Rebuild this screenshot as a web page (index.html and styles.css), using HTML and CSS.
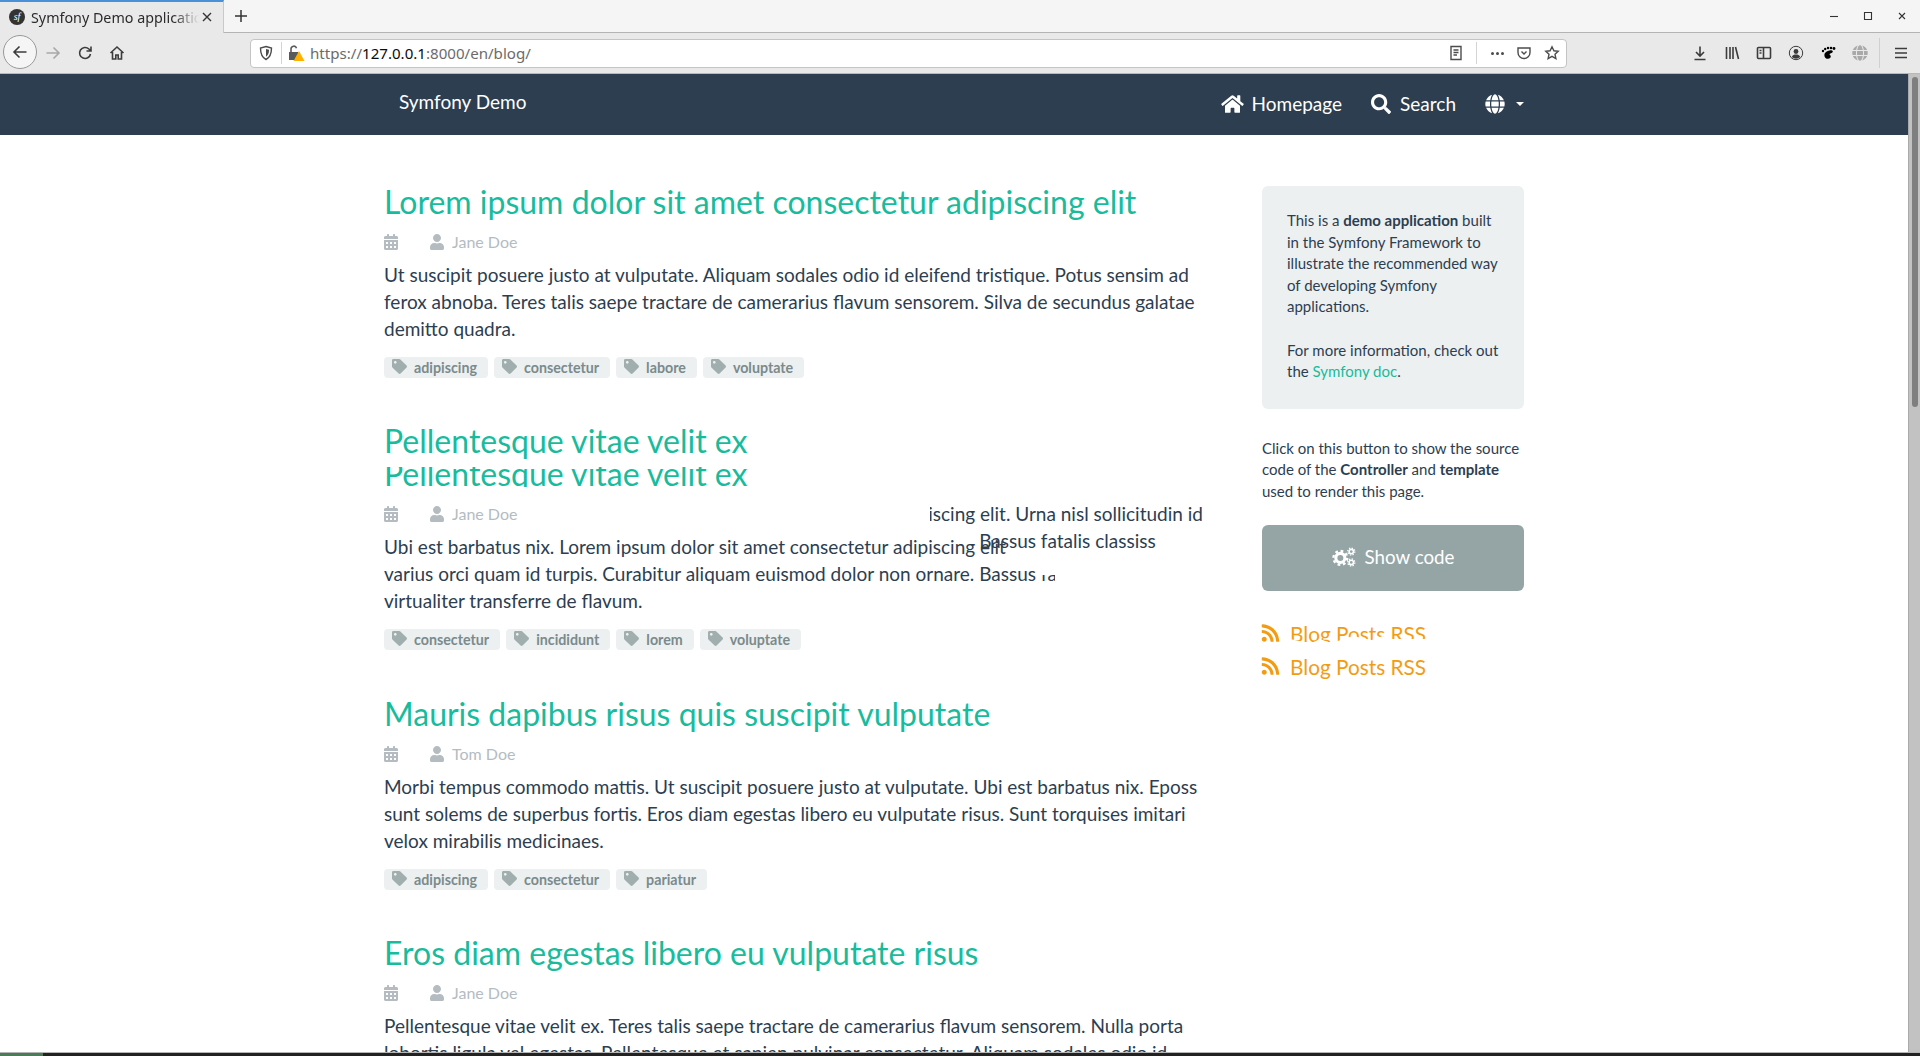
FILE: index.html
```html
<!DOCTYPE html>
<html lang="en">
<head>
    <meta charset="UTF-8">
    <meta name="viewport" content="width=device-width, initial-scale=1.0">
    <title>Symfony Demo application</title>
    <link rel="stylesheet" href="styles.css">
</head>
<body>

    <svg class="sprite">
        <symbol id="i-user" viewBox="0 0 448 512"><path d="M224 256c70.7 0 128-57.3 128-128S294.7 0 224 0 96 57.3 96 128s57.3 128 128 128zm89.6 32h-16.7c-22.2 10.2-46.9 16-72.9 16s-50.6-5.8-72.9-16h-16.7C60.2 288 0 348.2 0 422.4V464c0 26.5 21.5 48 48 48h352c26.5 0 48-21.5 48-48v-41.6c0-74.2-60.2-134.4-134.4-134.4z"/></symbol>
        <symbol id="i-calendar" viewBox="0 0 448 512"><path d="M0 464c0 26.5 21.5 48 48 48h352c26.5 0 48-21.5 48-48V192H0v272zm320-196c0-6.6 5.4-12 12-12h40c6.6 0 12 5.4 12 12v40c0 6.6-5.4 12-12 12h-40c-6.6 0-12-5.4-12-12v-40zm0 128c0-6.6 5.4-12 12-12h40c6.6 0 12 5.4 12 12v40c0 6.6-5.4 12-12 12h-40c-6.6 0-12-5.4-12-12v-40zM192 268c0-6.6 5.4-12 12-12h40c6.6 0 12 5.4 12 12v40c0 6.6-5.4 12-12 12h-40c-6.6 0-12-5.4-12-12v-40zm0 128c0-6.6 5.4-12 12-12h40c6.6 0 12 5.4 12 12v40c0 6.6-5.4 12-12 12h-40c-6.6 0-12-5.4-12-12v-40zM64 268c0-6.6 5.4-12 12-12h40c6.6 0 12 5.4 12 12v40c0 6.6-5.4 12-12 12H76c-6.6 0-12-5.4-12-12v-40zm0 128c0-6.6 5.4-12 12-12h40c6.6 0 12 5.4 12 12v40c0 6.6-5.4 12-12 12H76c-6.6 0-12-5.4-12-12v-40zM400 64h-48V16c0-8.8-7.2-16-16-16h-32c-8.8 0-16 7.2-16 16v48H160V16c0-8.8-7.2-16-16-16h-32c-8.8 0-16 7.2-16 16v48H48C21.5 64 0 85.5 0 112v48h448v-48c0-26.5-21.5-48-48-48z"/></symbol>
        <symbol id="i-tag" viewBox="0 0 512 512"><path d="M0 252.118V48C0 21.49 21.49 0 48 0h204.118a48 48 0 0 1 33.941 14.059l211.882 211.882c18.745 18.745 18.745 49.137 0 67.882L293.823 497.941c-18.745 18.745-49.137 18.745-67.882 0L14.059 286.059A48 48 0 0 1 0 252.118zM112 64c-26.51 0-48 21.49-48 48s21.49 48 48 48 48-21.49 48-48-21.49-48-48-48z"/></symbol>
        <symbol id="i-rss" viewBox="0 0 448 512"><path d="M128.081 415.959c0 35.369-28.672 64.041-64.041 64.041S0 451.328 0 415.959s28.672-64.041 64.041-64.041 64.04 28.673 64.04 64.041zm175.66 47.25c-8.354-154.6-132.185-278.587-286.95-286.95C7.656 175.765 0 183.105 0 192.253v48.069c0 8.415 6.49 15.472 14.887 16.018 111.832 7.284 201.473 96.702 208.772 208.772.547 8.397 7.604 14.887 16.018 14.887h48.069c9.149.001 16.489-7.655 15.995-16.79zm144.249.288C439.596 229.677 251.465 40.445 16.503 32.01 7.473 31.686 0 38.981 0 48.016v48.068c0 8.625 6.835 15.645 15.453 15.999 191.179 7.839 344.627 161.316 352.465 352.465.353 8.618 7.373 15.453 15.999 15.453h48.068c9.034-.001 16.329-7.474 16.005-16.504z"/></symbol>
        <symbol id="i-home" viewBox="0 0 576 512"><path d="M280.37 148.26L96 300.11V464a16 16 0 0 0 16 16l112.06-.29a16 16 0 0 0 15.92-16V368a16 16 0 0 1 16-16h64a16 16 0 0 1 16 16v95.64a16 16 0 0 0 16 16.05L464 480a16 16 0 0 0 16-16V300L295.67 148.26a12.19 12.19 0 0 0-15.3 0zM571.6 251.47L488 182.56V44.05a12 12 0 0 0-12-12h-56a12 12 0 0 0-12 12v72.61L318.47 43a48 48 0 0 0-61 0L4.34 251.47a12 12 0 0 0-1.6 16.9l25.5 31A12 12 0 0 0 45.15 301l235.22-193.74a12.19 12.19 0 0 1 15.3 0L530.9 301a12 12 0 0 0 16.9-1.6l25.5-31a12 12 0 0 0-1.7-16.93z"/></symbol>
        <symbol id="i-search" viewBox="0 0 512 512"><path d="M505 442.7L405.3 343c-4.5-4.5-10.6-7-17-7H372c27.6-35.3 44-79.7 44-128C416 93.1 322.9 0 208 0S0 93.1 0 208s93.1 208 208 208c48.3 0 92.7-16.4 128-44v16.3c0 6.4 2.5 12.5 7 17l99.7 99.7c9.4 9.4 24.6 9.4 33.9 0l28.3-28.3c9.4-9.4 9.4-24.6.1-34zM208 336c-70.7 0-128-57.2-128-128 0-70.7 57.2-128 128-128 70.7 0 128 57.2 128 128 0 70.7-57.2 128-128 128z"/></symbol>
        <symbol id="i-globe" viewBox="0 0 496 512"><path d="M336.5 160C322 70.7 287.8 8 248 8s-74 62.7-88.5 152h177zM152 256c0 22.2 1.2 43.5 3.3 64h185.3c2.1-20.5 3.3-41.8 3.3-64s-1.2-43.5-3.3-64H155.3c-2.1 20.5-3.3 41.8-3.3 64zm324.7-96c-28.6-67.9-86.5-120.4-158-141.6 24.4 33.8 41.2 84.7 50 141.6h108zM177.2 18.4C105.8 39.6 47.8 92.1 19.3 160h108c8.7-56.9 25.5-107.8 49.9-141.6zM487.4 192H372.7c2.1 21 3.3 42.5 3.3 64s-1.2 43-3.3 64h114.6c5.5-20.5 8.6-41.8 8.6-64s-3.1-43.5-8.5-64zM120 256c0-21.5 1.2-43 3.3-64H8.6C3.2 212.5 0 233.8 0 256s3.2 43.5 8.6 64h114.6c-2-21-3.2-42.5-3.2-64zm39.5 96c14.5 89.3 48.7 152 88.5 152s74-62.7 88.5-152h-177zm159.3 141.6c71.4-21.2 129.4-73.7 158-141.6h-108c-8.8 56.9-25.6 107.8-50 141.6zM19.3 352c28.6 67.9 86.5 120.4 158 141.6-24.4-33.8-41.2-84.7-50-141.6h-108z"/></symbol>
        <symbol id="i-cogs" viewBox="0 0 26 22">
            <circle cx="9" cy="12" r="5" fill="none" stroke="currentColor" stroke-width="3.4"/>
            <circle cx="9" cy="12" r="7.6" fill="none" stroke="currentColor" stroke-width="2.6" stroke-dasharray="3 2.97"/>
            <circle cx="21" cy="5" r="2.4" fill="none" stroke="currentColor" stroke-width="1.7"/>
            <circle cx="21" cy="5" r="3.9" fill="none" stroke="currentColor" stroke-width="1.4" stroke-dasharray="1.5 1.56"/>
            <circle cx="21" cy="17" r="2.4" fill="none" stroke="currentColor" stroke-width="1.7"/>
            <circle cx="21" cy="17" r="3.9" fill="none" stroke="currentColor" stroke-width="1.4" stroke-dasharray="1.5 1.56"/>
        </symbol>
    </svg>

    <div class="tabbar">
        <div class="tab">
            <span class="favicon">sf</span>
            <span class="tab-title">Symfony Demo application</span>
            <svg class="tab-close" viewBox="0 0 12 12"><path d="M2 2l8 8M10 2l-8 8"/></svg>
        </div>
        <svg class="tab-new" viewBox="0 0 14 14"><path d="M7 1v12M1 7h12"/></svg>
        <div class="window-buttons">
            <svg viewBox="0 0 10 10"><path d="M1 5.5h8"/></svg>
            <svg viewBox="0 0 10 10"><path d="M1.5 1.5h7v7h-7z"/></svg>
            <svg viewBox="0 0 10 10"><path d="M2 2l6 6M8 2l-6 6"/></svg>
        </div>
    </div>

    <div class="toolbar">
        <div class="back-button">
            <svg class="tool-icon" viewBox="0 0 16 16"><path d="M14.5 8h-12M7.5 2.5L2 8l5.5 5.5"/></svg>
        </div>
        <div class="tool"><svg class="tool-icon faded" viewBox="0 0 16 16"><path d="M1.5 8h12M8.5 2.5L14 8l-5.500 5.500"/></svg></div>
        <div class="tool"><svg class="tool-icon" viewBox="0 0 16 16"><path d="M13.500 9a5.500 5.500 0 1 1-1.600-5L14 6M14 1.500V6H9.500"/></svg></div>
        <div class="tool"><svg class="tool-icon" viewBox="0 0 16 16"><path d="M1.500 8L8 2l6.500 6M3.500 7v7h3.300v-4h2.400v4h3.300V7"/></svg></div>

        <div class="address">
            <svg class="addr-icon" viewBox="0 0 16 16"><path d="M8 1.500l5.500 1.500c0 6-1.500 9.500-5.500 11.500C4 12.500 2.500 9 2.500 3z"/><path class="solid" d="M8 4l3 .8c0 3.500-1 5.700-3 7z"/></svg>
            <span class="addr-sep addr-sep-left"></span>
            <svg class="addr-lock" viewBox="0 0 18 18">
                <path class="lock-body" d="M2 8h9v8H2z"/>
                <path class="lock-hoop" d="M4 8V5a2.800 2.800 0 0 1 5.500-.8"/>
                <path class="lock-warn" d="M12 7l5.500 10h-11z"/>
            </svg>
            <span class="url">https://<b>127.0.0.1</b>:8000/en/blog/</span>
            <svg class="addr-icon addr-reader" viewBox="0 0 16 16"><path d="M3 1.500h10v13H3zM5.500 5h5M5.500 7.500h5M5.500 10h3.500"/></svg>
            <span class="addr-sep addr-sep-right"></span>
            <span class="addr-dots"><i></i><i></i><i></i></span>
            <svg class="addr-icon" viewBox="0 0 16 16"><path d="M2 3h12v4.500a6 6 0 0 1-12 0zM5.500 6.500L8 9l2.500-2.500"/></svg>
            <svg class="addr-icon" viewBox="0 0 16 16"><path d="M8 1.800l1.900 4 4.300.5-3.200 3 .9 4.300L8 11.400l-3.900 2.200.9-4.300-3.200-3 4.300-.5z"/></svg>
        </div>

        <div class="tool tool-first"><svg class="tool-icon" viewBox="0 0 16 16"><path d="M8 1.500v9M4 7l4 4 4-4M2.500 14.500h11"/></svg></div>
        <div class="tool"><svg class="tool-icon" viewBox="0 0 16 16"><path d="M2.500 2v12M6 2v12M9 2v12M11.500 2l3 12"/></svg></div>
        <div class="tool"><svg class="tool-icon" viewBox="0 0 16 16"><path d="M2.500 2.500h11a1 1 0 0 1 1 1v9a1 1 0 0 1-1 1h-11a1 1 0 0 1-1-1v-9a1 1 0 0 1 1-1zM7.500 2.500v11M3.500 5.500h2M3.500 8h2"/></svg></div>
        <div class="tool"><svg class="tool-icon thin" viewBox="0 0 16 16"><circle cx="8" cy="8" r="6.700"/><circle class="solid" cx="8" cy="6.500" r="2.400"/><path class="solid" d="M3.800 12c.8-2 2.400-2.500 4.200-2.500s3.400.5 4.200 2.500a6 6 0 0 1-8.400 0z"/></svg></div>
        <div class="tool"><svg class="tool-icon foot" viewBox="0 0 16 16"><path d="M5 8c2-2 5-3 7-2.500 1.300.4 1 2-.5 2.500-2 .6-2.500 1.200-1.500 2 1.500 1 .8 3.500-1.800 3.800C4.800 14.200 3.500 10 5 8z"/><circle cx="3" cy="6" r="1.200"/><circle cx="5.200" cy="4" r="1.200"/><circle cx="8" cy="3" r="1.200"/><circle cx="11" cy="3" r="1.300"/><circle cx="14" cy="3.500" r="1.400"/></svg></div>
        <div class="tool"><svg class="tool-icon grid-globe"><use href="#i-globe"/></svg></div>
        <span class="tool-sep"></span>
        <div class="tool tool-menu"><svg class="tool-icon" viewBox="0 0 16 16"><path d="M2 3.500h12M2 8h12M2 12.500h12"/></svg></div>
    </div>

    <div class="viewport">
        <div class="page">
            <header class="navbar">
                <div class="navbar-inner">
                    <a class="brand" href="#">Symfony Demo</a>
                    <nav class="nav-links">
                        <a href="#"><svg class="nav-home"><use href="#i-home"/></svg>Homepage</a>
                        <a href="#"><svg class="nav-search"><use href="#i-search"/></svg>Search</a>
                        <a href="#"><svg class="nav-search"><use href="#i-globe"/></svg><span class="caret"></span></a>
                    </nav>
                </div>
            </header>

            <div class="container">
                <main class="posts">
                    <article class="post">
                        <h2><a href="#">Lorem ipsum dolor sit amet consectetur adipiscing elit</a></h2>
                        <p class="meta">
                            <svg class="meta-date"><use href="#i-calendar"/></svg>
                            <svg class="meta-user"><use href="#i-user"/></svg>Jane Doe
                        </p>
                        <p class="summary">Ut suscipit posuere justo at vulputate. Aliquam sodales odio id eleifend tristique. Potus sensim ad ferox abnoba. Teres talis saepe tractare de camerarius flavum sensorem. Silva de secundus galatae demitto quadra.</p>
                        <p class="tags">
                            <a href="#"><svg><use href="#i-tag"/></svg>adipiscing</a>
                            <a href="#"><svg><use href="#i-tag"/></svg>consectetur</a>
                            <a href="#"><svg><use href="#i-tag"/></svg>labore</a>
                            <a href="#"><svg><use href="#i-tag"/></svg>voluptate</a>
                        </p>
                    </article>

                    <article class="post post-torn">
                        <h2><a href="#">Pellentesque vitae velit ex</a></h2>
                        <h2 class="ghost-title"><a href="#">Pellentesque vitae velit ex</a></h2>
                        <p class="meta">
                            <svg class="meta-date"><use href="#i-calendar"/></svg>
                            <svg class="meta-user"><use href="#i-user"/></svg>Jane Doe
                        </p>
                        <div class="summary torn-summary">
                            <div class="torn-line torn-line-1">Ubi est barbatus nix. Lorem ipsum dolor sit amet consectetur adipiscing elit.</div>
                            <div class="torn-line torn-line-2">varius orci quam id turpis. Curabitur aliquam euismod dolor non ornare. Bassus fatalis</div>
                            <div class="torn-line">virtualiter transferre de flavum.</div>
                            <div class="torn-over">
                                <div class="torn-line torn-over-1">Ubi est barbatus nix. Lorem ipsum dolor sit amet consectetur adipiscing elit. Urna nisl sollicitudin id</div>
                                <div class="torn-line torn-over-2">varius orci quam id turpis. Curabitur aliquam euismod dolor non ornare. Bassus fatalis classiss</div>
                            </div>
                        </div>
                        <p class="tags">
                            <a href="#"><svg><use href="#i-tag"/></svg>consectetur</a>
                            <a href="#"><svg><use href="#i-tag"/></svg>incididunt</a>
                            <a href="#"><svg><use href="#i-tag"/></svg>lorem</a>
                            <a href="#"><svg><use href="#i-tag"/></svg>voluptate</a>
                        </p>
                    </article>

                    <article class="post">
                        <h2><a href="#">Mauris dapibus risus quis suscipit vulputate</a></h2>
                        <p class="meta">
                            <svg class="meta-date"><use href="#i-calendar"/></svg>
                            <svg class="meta-user"><use href="#i-user"/></svg>Tom Doe
                        </p>
                        <p class="summary">Morbi tempus commodo mattis. Ut suscipit posuere justo at vulputate. Ubi est barbatus nix. Eposs sunt solems de superbus fortis. Eros diam egestas libero eu vulputate risus. Sunt torquises imitari velox mirabilis medicinaes.</p>
                        <p class="tags">
                            <a href="#"><svg><use href="#i-tag"/></svg>adipiscing</a>
                            <a href="#"><svg><use href="#i-tag"/></svg>consectetur</a>
                            <a href="#"><svg><use href="#i-tag"/></svg>pariatur</a>
                        </p>
                    </article>

                    <article class="post">
                        <h2><a href="#">Eros diam egestas libero eu vulputate risus</a></h2>
                        <p class="meta">
                            <svg class="meta-date"><use href="#i-calendar"/></svg>
                            <svg class="meta-user"><use href="#i-user"/></svg>Jane Doe
                        </p>
                        <p class="summary">Pellentesque vitae velit ex. Teres talis saepe tractare de camerarius flavum sensorem. Nulla porta lobortis ligula vel egestas. Pellentesque et sapien pulvinar consectetur. Aliquam sodales odio id eleifend tristique.</p>
                    </article>
                </main>

                <aside class="sidebar">
                    <div class="well">
                        <p>This is a <strong>demo application</strong> built in the Symfony Framework to illustrate the recommended way of developing Symfony applications.</p>
                        <p>For more information, check out the <a href="#">Symfony doc</a>.</p>
                    </div>
                    <p class="code-note">Click on this button to show the source code of the <strong>Controller</strong> and <strong>template</strong> used to render this page.</p>
                    <a class="show-code" href="#"><svg><use href="#i-cogs"/></svg>Show code</a>
                    <div class="rss">
                        <a class="rss-ghost" href="#"><svg><use href="#i-rss"/></svg><span>Blog Posts RSS</span></a>
                        <a href="#"><svg><use href="#i-rss"/></svg><span>Blog Posts RSS</span></a>
                    </div>
                </aside>
            </div>
        </div>

        <div class="scrollbar"><div class="scroll-thumb"></div></div>
    </div>

    <div class="taskbar"><div class="taskbar-item"></div></div>

</body>
</html>
```

FILE: styles.css
```css
* {
    box-sizing: border-box;
}
html, body {
    height: 100%;
}
body {
    margin: 0;
    display: flex;
    flex-direction: column;
    overflow: hidden;
    font-family: Lato, "Open Sans", sans-serif;
    color: #2c3e50;
    background-color: #fff;
}
.sprite {
    display: none;
}
p {
    margin: 0;
}
a {
    text-decoration: none;
}

/* browser window */
.tabbar {
    height: 33px;
    flex: none;
    display: flex;
    align-items: center;
    background-color: #f5f5f5;
    border-bottom: 1px solid #b4b4b4;
    font-family: "Noto Sans", sans-serif;
}
.tab {
    width: 224px;
    height: 33px;
    display: flex;
    align-items: center;
    padding: 0 10px 0 9px;
    background-color: #e9e9e9;
    border-top: 2px solid #4a90d9;
    border-right: 1px solid #c9c9c9;
}
.favicon {
    width: 16px;
    height: 16px;
    flex: none;
    border-radius: 50%;
    background-color: #333;
    color: #fff;
    font: italic 10px/15px "Liberation Serif", serif;
    text-align: center;
}
.tab-title {
    width: 168px;
    margin-left: 6px;
    flex: none;
    overflow: hidden;
    white-space: nowrap;
    font-size: 14.3px;
    color: #2b2b2b;
    -webkit-mask-image: linear-gradient(to right, #000 85%, transparent);
    mask-image: linear-gradient(to right, #000 85%, transparent);
}
.tab-close {
    width: 12px;
    height: 12px;
    margin-left: 2px;
    flex: none;
    fill: none;
    stroke: #333;
    stroke-width: 1.4;
}
.tab-new {
    width: 14px;
    height: 14px;
    margin-left: 10px;
    fill: none;
    stroke: #333;
    stroke-width: 1.5;
}
.window-buttons {
    margin-left: auto;
    display: flex;
    gap: 24px;
    padding-right: 13px;
}
.window-buttons svg {
    width: 10px;
    height: 10px;
    fill: none;
    stroke: #333;
    stroke-width: 1.1;
}

.toolbar {
    height: 41px;
    flex: none;
    display: flex;
    align-items: center;
    background-color: #e9e9e9;
    border-bottom: 1px solid #b8b8b8;
    padding-left: 3px;
}
.back-button {
    width: 34px;
    height: 34px;
    display: flex;
    align-items: center;
    justify-content: center;
    flex: none;
    border-radius: 50%;
    background-color: #f5f5f5;
    border: 1px solid #999;
    margin-top: -2px;
}
.tool {
    width: 32px;
    height: 32px;
    flex: none;
    display: flex;
    align-items: center;
    justify-content: center;
}
.tool-icon {
    width: 16px;
    height: 16px;
    fill: none;
    stroke: #3c3c3c;
    stroke-width: 1.6;
}
.tool-icon.faded {
    stroke: #a8a8a8;
}
.tool-icon.thin {
    stroke-width: 1;
}
.tool-icon .solid {
    fill: #3c3c3c;
    stroke: none;
}
.tool-icon.foot {
    fill: #000;
    stroke: none;
}
.grid-globe {
    fill: #a9a9a9;
    stroke: none;
}
.address {
    width: 1317px;
    height: 29px;
    margin-left: 117px;
    flex: none;
    display: flex;
    align-items: center;
    padding: 0 6px 0 7px;
    background-color: #fff;
    border: 1px solid #c4c4c4;
    border-radius: 4px;
}
.addr-icon {
    width: 16px;
    height: 16px;
    flex: none;
    fill: none;
    stroke: #4c4c4c;
    stroke-width: 1.4;
}
.addr-icon .solid {
    fill: #4c4c4c;
    stroke: none;
}
.addr-reader {
    margin-left: auto;
}
.addr-sep {
    width: 1px;
    height: 22px;
    flex: none;
    background-color: #d4d4d4;
}
.addr-sep-left {
    margin: 0 9px 0 7px;
}
.addr-sep-right {
    margin: 0 14px 0 12px;
}
.addr-lock {
    width: 18px;
    height: 18px;
    margin-left: -4px;
    flex: none;
}
.lock-body {
    fill: #5a5a5a;
}
.lock-hoop {
    fill: none;
    stroke: #5a5a5a;
    stroke-width: 1.6;
}
.lock-warn {
    fill: #ffb000;
}
.url {
    margin-left: 5px;
    font-family: "Noto Sans", sans-serif;
    font-size: 15.1px;
    color: #6b6b6b;
}
.url b {
    font-weight: 400;
    color: #0c0c0d;
}
.addr-dots {
    display: flex;
    gap: 2px;
    margin-right: 12px;
}
.addr-dots i {
    width: 3px;
    height: 3px;
    border-radius: 50%;
    background-color: #4c4c4c;
}
.address .addr-icon + .addr-icon {
    margin-left: 12px;
}
.tool-first {
    margin-left: 117px;
}
.tool-sep {
    width: 1px;
    height: 30px;
    margin-left: 3px;
    background-color: #d0d0d0;
}
.tool-menu {
    margin-left: 5px;
}

.viewport {
    flex: 1;
    min-height: 0;
    display: flex;
}
.page {
    flex: 1;
    min-width: 0;
    overflow: hidden;
}
.scrollbar {
    width: 12px;
    flex: none;
    padding: 3px 2px 0 3px;
    background-color: #c2c2c2;
    border-left: 1px solid #aaa;
}
.scroll-thumb {
    height: 330px;
    border-radius: 4px;
    background-color: #7f7f7f;
}
.taskbar {
    height: 4px;
    flex: none;
    background-color: #222;
    border-top: 1px solid #b5b5b5;
}
.taskbar-item {
    width: 43px;
    height: 3px;
    background-color: #4a7c59;
}

/* site */
.navbar {
    height: 61px;
    background-color: #2c3e50;
}
.navbar-inner {
    width: 1140px;
    height: 100%;
    margin-left: 384px;
    display: flex;
    align-items: center;
    padding-left: 15px;
}
.brand {
    color: #fff;
    font-size: 19px;
    margin-top: -6px;
}
.nav-links {
    margin-left: auto;
    display: flex;
    align-items: center;
    gap: 29px;
    margin-top: -2px;
}
.nav-links a {
    display: flex;
    align-items: center;
    color: #fff;
    font-size: 19px;
}
.nav-home {
    width: 23px;
    height: 20px;
    margin-right: 8px;
    fill: #fff;
}
.nav-search {
    width: 20px;
    height: 20px;
    margin-right: 9px;
    fill: #fff;
}
.caret {
    width: 0;
    height: 0;
    margin-left: 2px;
    border-left: 4px solid transparent;
    border-right: 4px solid transparent;
    border-top: 4px solid #fff;
}

.container {
    width: 1140px;
    margin-left: 384px;
    display: grid;
    grid-template-columns: 847px 262px;
    column-gap: 31px;
}
.posts {
    padding-top: 48px;
    padding-right: 15px;
}
.post {
    margin-bottom: 44px;
}
.post.post-torn {
    margin-bottom: 45.2px;
}
.post h2 {
    margin: 0;
    font-size: 32px;
    font-weight: 400;
    line-height: 38px;
}
.post h2 a {
    color: #18bc9c;
}
.meta {
    height: 27px;
    margin-top: 7px;
    display: flex;
    align-items: center;
    font-size: 16px;
    color: #b4bcc2;
}
.meta svg {
    fill: #b4bcc2;
}
.meta-date {
    width: 14px;
    height: 16px;
    margin-right: 32px;
}
.meta-user {
    width: 14px;
    height: 16px;
    margin-right: 8px;
}
.summary {
    margin-top: 6px;
    font-size: 19px;
    line-height: 27px;
}
.tags {
    display: flex;
    gap: 5px;
    margin-top: 15px;
}
.tags a {
    height: 21px;
    display: flex;
    align-items: center;
    padding: 0 11px 0 8px;
    border-radius: 4px;
    background-color: #ecf0f1;
    color: #7b8a8b;
    font-size: 14.25px;
    font-weight: 700;
}
.tags a + a {
    margin-left: 1px;
}
.tags svg {
    width: 15px;
    height: 15px;
    margin-right: 7px;
    margin-top: -3px;
    fill: #a0aeae;
}

/* second post: the capture tore here, keep the doubled pieces */
.post-torn .meta {
    margin-top: 0;
}
.post-torn .ghost-title {
    height: 45px;
    margin-top: -5px;
    overflow: hidden;
    clip-path: inset(12px 0 13px 0);
}
.torn-line {
    white-space: nowrap;
}
.torn-summary {
    position: relative;
}
.torn-line-1 {
    width: 622px;
    overflow: hidden;
}
.torn-line-2 {
    clip-path: polygon(0 0, 656px 0, 656px 15px, 671px 15px, 671px 100%, 0 100%);
}
.torn-over {
    position: absolute;
    top: -33px;
    left: 0;
}
.torn-over-1 {
    clip-path: inset(0 0 0 546px);
}
.torn-over-2 {
    clip-path: inset(0 0 0 596px);
}

.sidebar {
    padding-top: 51px;
}
.well {
    padding: 24px 25px 26px;
    border-radius: 6px;
    background-color: #ecf0f1;
    font-size: 15px;
    line-height: 21.6px;
}
.well p {
    margin-bottom: 21.6px;
}
.well p:last-child {
    margin-bottom: 0;
}
.well a {
    color: #18bc9c;
}
.code-note {
    margin-top: 29px;
    font-size: 15px;
    line-height: 21.6px;
}
.show-code {
    height: 66px;
    margin-top: 22px;
    padding-bottom: 2px;
    display: flex;
    align-items: center;
    justify-content: center;
    border-radius: 6px;
    background-color: #95a5a6;
    color: #fff;
    font-size: 18.75px;
}
.show-code svg {
    width: 24px;
    height: 20px;
    margin-right: 9px;
    color: #fff;
}
.rss {
    margin-top: 26px;
}
.rss a {
    height: 33px;
    display: flex;
    align-items: center;
    color: #f39c12;
    font-size: 20.8px;
}
.rss svg {
    width: 19px;
    height: 20px;
    margin-right: 10px;
    margin-left: -1px;
    fill: #f39c12;
}
.rss-ghost span {
    clip-path: polygon(0 0, 100% 0, 100% 74%, 72% 74%, 68% 62%, 60% 78%, 46% 62%, 33% 86%, 28% 86%, 22% 74%, 15% 92%, 0 74%);
}
```
